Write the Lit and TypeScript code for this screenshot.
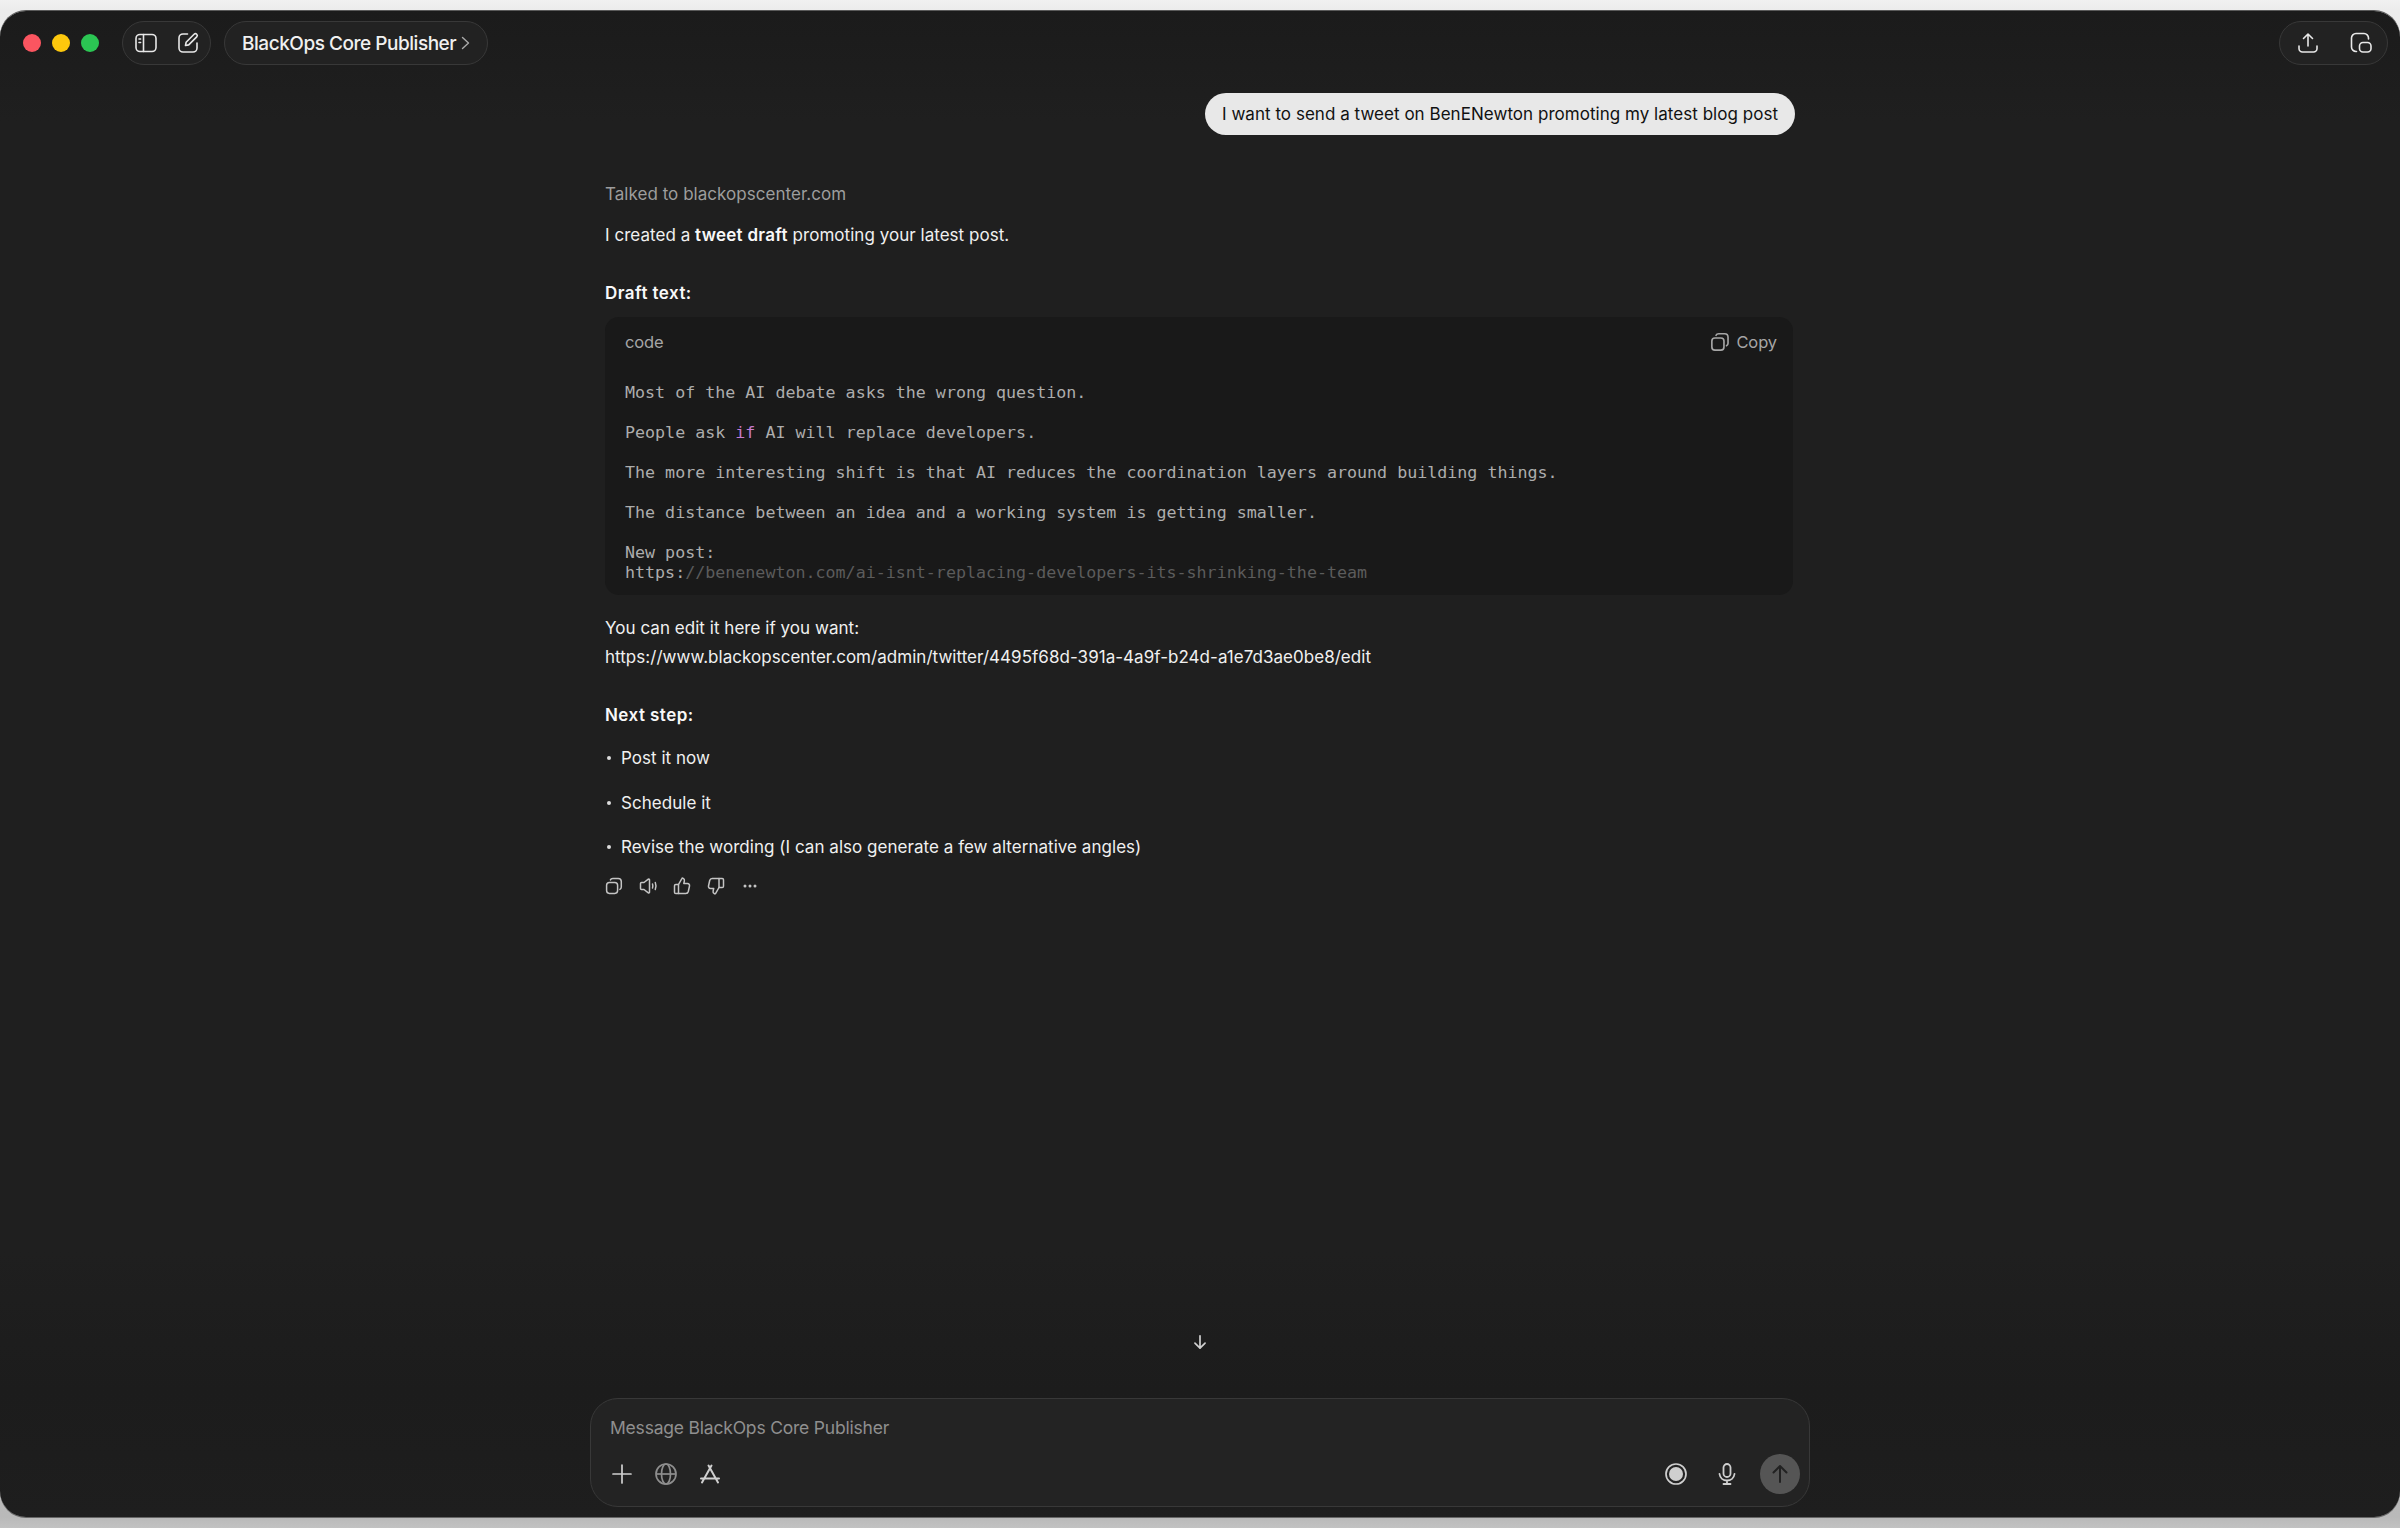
import { LitElement, html, css } from "lit";
import { customElement } from "lit/decorators.js";

const copyIcon = html`<svg viewBox="0 0 20 20" fill="none" stroke="currentColor" stroke-width="1.5" stroke-linecap="round" stroke-linejoin="round"><rect x="2.6" y="6.4" width="11" height="11" rx="2.8"/><path d="M6.4 3.900c.4-1 1.300-1.400 2.400-1.400h5.400c1.800 0 3.100 1.300 3.100 3.100v5.500c0 1-.5 1.900-1.400 2.300"/></svg>`;

@customElement("app-root")
export class AppRoot extends LitElement {
  static styles = css`
    :host {
      display: block;
      height: 1528px;
      overflow: hidden;
      background: linear-gradient(180deg, #f1f1f1 0, #ececec 10px, #b9b9b9 1517px, #c2c2c2 100%);
      font-family: Inter, "Liberation Sans", sans-serif;
    }
    svg { display: block; }
    .window {
      box-sizing: border-box;
      margin-top: 11px;
      height: 1506px;
      border-radius: 26px;
      background: linear-gradient(180deg, #1b1b1b 0, #1f1f1f 110px, #1f1f1f 1240px, #1c1c1c 1380px, #1e1e1e 100%);
      display: flex;
      flex-direction: column;
      box-shadow: 0 -1px 0 #5a5a5a, 0 1px 0 #666;
      color: #ececec;
    }
    .topbar {
      flex: none;
      height: 54px;
      box-sizing: border-box;
      padding: 10px 12px 0 23px;
      display: flex;
      align-items: flex-start;
    }
    .lights { display: flex; gap: 11px; margin-top: 13px; margin-right: 23px; }
    .dot { width: 18px; height: 18px; border-radius: 50%; }
    .red { background: #fb5560; }
    .yellow { background: #fdc80d; }
    .green { background: #2bc653; }
    .pill {
      box-sizing: border-box;
      height: 44px;
      border: 1px solid #383838;
      border-radius: 22px;
      background: #222222;
      display: flex;
      align-items: center;
      color: #e8e8e8;
    }
    .pill-icons { width: 89px; padding: 0 10px 0 11px; justify-content: space-between; margin-right: 13px; }
    .pill-icons svg { width: 24px; height: 24px; }
    .title {
      width: 264px;
      padding-left: 17px;
      font-size: 19px;
      font-weight: 500;
      color: #f0f0f0;
      letter-spacing: -0.47px;
      white-space: nowrap;
      gap: 5px;
    }
    .title svg { width: 9px; height: 14px; color: #aaa; }
    .spacer { flex: 1; }
    .pill-right { width: 109px; padding: 0 14px 0 16px; justify-content: space-between; }
    .pill-right svg { width: 24px; height: 24px; }

    .main { flex: 1; min-height: 0; display: flex; flex-direction: column; align-items: center; padding-top: 28px; }
    .column { width: 1190px; font-size: 17px; line-height: 26px; color: #f0f0f0; letter-spacing: 0.035px; }
    .bubble-row { display: flex; justify-content: flex-end; margin-bottom: 46px; }
    .bubble {
      box-sizing: border-box;
      width: 590px;
      height: 42px;
      border-radius: 21px;
      background: #e8e8e8;
      color: #111;
      padding-left: 17px;
      line-height: 42px;
      white-space: nowrap;
    }
    .talked { color: #9d9d9d; margin-bottom: 15px; }
    .p { white-space: nowrap; }
    .lead { margin-bottom: 32px; }
    b { font-weight: 600; color: #f8f8f8; letter-spacing: 0.28px; }
    .draft b, .next b { letter-spacing: 0.45px; }
    .draft { margin-bottom: 11px; }
    .code {
      box-sizing: border-box;
      width: 1188px;
      height: 278px;
      border-radius: 14px;
      background: #191919;
      padding: 0 16px 0 20px;
      color: #a9a9a9;
    }
    .code-head {
      height: 50px;
      display: flex;
      align-items: center;
      justify-content: space-between;
      color: #a6a6a6;
      font-size: 16.5px;
      letter-spacing: -0.1px;
    }
    .copy { display: flex; align-items: center; gap: 5px; }
    .copy svg { width: 22px; height: 22px; }
    pre {
      margin: 16px 0 0;
      font-family: "DejaVu Sans Mono", monospace;
      font-size: 16.66px;
      letter-spacing: 0;
      line-height: 20px;
      color: #adadad;
    }
    .kw { color: #c77dd0; }
    .dim { color: #5c5c5c; }
    .edit { margin-top: 19px; line-height: 29px; }
    .next { margin-top: 30px; margin-bottom: 17px; }
    ul { list-style: none; margin: 0; padding: 0; display: flex; flex-direction: column; gap: 18.5px; }
    li { display: flex; align-items: center; }
    .bullet { width: 4px; height: 4px; border-radius: 50%; background: #dcdcdc; margin: 0 10px 0 2px; flex: none; }
    .actions { display: flex; gap: 14px; margin-top: 16px; margin-left: -1px; color: #c4c4c4; }
    .actions svg { width: 20px; height: 20px; }
    .down-row { flex: none; height: 30px; margin-bottom: 41px; display: flex; justify-content: center; align-items: center; color: #d0d0d0; }
    .down-row svg { width: 18px; height: 18px; }
    .composer {
      flex: none;
      box-sizing: border-box;
      width: 1220px;
      height: 109px;
      margin: 0 auto 10px;
      border: 1px solid #383838;
      border-radius: 28px;
      background: #232323;
      display: flex;
      flex-direction: column;
      padding: 16px 9px 0 19px;
    }
    .placeholder { color: #8f8f8f; font-size: 17.5px; line-height: 26px; letter-spacing: -0.2px; white-space: nowrap; }
    .tools { display: flex; align-items: center; margin-top: 13px; height: 40px; }
    .tool-left { display: flex; align-items: center; gap: 20px; color: #cfcfcf; }
    .tool-left svg { width: 24px; height: 24px; }
    .tool-right { margin-left: auto; display: flex; align-items: center; gap: 27px; color: #cfcfcf; }
    .tool-right svg { width: 24px; height: 24px; }
    .send { width: 40px; height: 40px; border-radius: 50%; background: #555; color: #222; display: flex; align-items: center; justify-content: center; margin-left: -6px; }
    .send svg { width: 24px; height: 24px; }
    .globe { color: #8e8e8e; }
  `;

  render() {
    return html`
      <div class="window">
        <header class="topbar">
          <div class="lights"><span class="dot red"></span><span class="dot yellow"></span><span class="dot green"></span></div>
          <div class="pill pill-icons">
            <svg viewBox="0 0 24 24" fill="none" stroke="currentColor" stroke-width="1.6" stroke-linecap="round"><rect x="2" y="3.500" width="20" height="17" rx="4"/><path d="M9.500 3.500v17M5 8h1.600M5 11.500h1.600"/></svg>
            <svg viewBox="0 0 24 24" fill="none" stroke="currentColor" stroke-width="1.6" stroke-linecap="round" stroke-linejoin="round"><path d="M11.500 3H7a4 4 0 0 0-4 4v10a4 4 0 0 0 4 4h10a4 4 0 0 0 4-4v-5"/><path d="M9.500 14.500l.6-3.200 8-8a1.800 1.800 0 0 1 2.600 2.600l-8 8z"/></svg>
          </div>
          <div class="pill title">BlackOps Core Publisher
            <svg viewBox="0 0 9 14" fill="none" stroke="currentColor" stroke-width="1.4" stroke-linecap="round" stroke-linejoin="round"><path d="M1.500 1.500L7.500 7l-6 5.500"/></svg>
          </div>
          <div class="spacer"></div>
          <div class="pill pill-right">
            <svg viewBox="0 0 24 24" fill="none" stroke="currentColor" stroke-width="1.6" stroke-linecap="round" stroke-linejoin="round"><path d="M12 15V3M7.500 7.500L12 3l4.500 4.500M3 15v2.500A3.500 3.500 0 0 0 6.500 21h11a3.500 3.500 0 0 0 3.500-3.500V15"/></svg>
            <svg viewBox="0 0 24 24" fill="none" stroke="currentColor" stroke-width="1.6" stroke-linecap="round" stroke-linejoin="round"><path d="M7.500 20.500H7A4.500 4.500 0 0 1 2.500 16V7A4.500 4.500 0 0 1 7 2.500h8A4.500 4.500 0 0 1 19.500 7v1"/><rect x="10.500" y="11.500" width="11.500" height="9.500" rx="3.500"/></svg>
          </div>
        </header>

        <main class="main">
          <div class="column">
            <div class="bubble-row"><div class="bubble">I want to send a tweet on BenENewton promoting my latest blog post</div></div>
            <div class="talked">Talked to blackopscenter.com</div>
            <div class="p lead">I created a <b>tweet draft</b> promoting your latest post.</div>
            <div class="p draft"><b>Draft text:</b></div>
            <div class="code">
              <div class="code-head"><span>code</span><span class="copy">${copyIcon}Copy</span></div>
              <pre>Most of the AI debate asks the wrong question.

People ask <span class="kw">if</span> AI will replace developers.

The more interesting shift is that AI reduces the coordination layers around building things.

The distance between an idea and a working system is getting smaller.

New post:
https:<span class="dim">//benenewton.com/ai-isnt-replacing-developers-its-shrinking-the-team</span></pre>
            </div>
            <div class="p edit">You can edit it here if you want:<br />https://www.blackopscenter.com/admin/twitter/4495f68d-391a-4a9f-b24d-a1e7d3ae0be8/edit</div>
            <div class="p next"><b>Next step:</b></div>
            <ul>
              <li><span class="bullet"></span>Post it now</li>
              <li><span class="bullet"></span>Schedule it</li>
              <li><span class="bullet"></span>Revise the wording (I can also generate a few alternative angles)</li>
            </ul>
            <div class="actions">
              ${copyIcon}
              <svg viewBox="0 0 20 20" fill="none" stroke="currentColor" stroke-width="1.5" stroke-linecap="round" stroke-linejoin="round"><path d="M2.500 7.500v5c0 .6.400 1 1 1H6l4.300 3.300c.6.400 1.200.100 1.200-.6V3.800c0-.7-.6-1-1.200-.6L6 6.500H3.500c-.6 0-1 .4-1 1z"/><path d="M14.500 8c.5 1.300.5 2.700 0 4M17.300 6.500c.9 2.300.9 4.700 0 7"/></svg>
              <svg viewBox="0 0 20 20" fill="none" stroke="currentColor" stroke-width="1.5" stroke-linecap="round" stroke-linejoin="round"><path d="M6.500 8.500l3.200-5.700c.3-.6.900-.8 1.500-.5 1 .5 1.400 1.500 1.200 2.500L11.800 7.500h3.700c1.300 0 2.300 1.200 2 2.500l-1.200 5.500c-.3 1.200-1.300 2-2.500 2H6.500"/><path d="M2.500 9.800c0-.7.600-1.300 1.300-1.300h2.700v9H3.800c-.7 0-1.300-.6-1.300-1.300z"/></svg>
              <svg viewBox="0 0 20 20" fill="none" stroke="currentColor" stroke-width="1.5" stroke-linecap="round" stroke-linejoin="round"><path d="M13 11.500L9.800 17.200c-.3.6-.9.800-1.500.5-1-.5-1.400-1.500-1.200-2.500l.6-2.700H4.500c-1.300 0-2.300-1.200-2-2.500l1.200-5.500c.3-1.200 1.300-2 2.500-2H13"/><path d="M17.500 10.200c0 .7-.6 1.300-1.300 1.300H13v-9h3.200c.7 0 1.300.6 1.300 1.300z"/></svg>
              <svg viewBox="0 0 20 20" fill="currentColor"><circle cx="5" cy="10" r="1.500"/><circle cx="10" cy="10" r="1.500"/><circle cx="15" cy="10" r="1.500"/></svg>
            </div>
          </div>
        </main>

        <div class="down-row">
          <svg viewBox="0 0 16 16" fill="none" stroke="currentColor" stroke-width="1.500" stroke-linecap="round" stroke-linejoin="round"><path d="M8 2.500v11M3.500 9L8 13.500 12.500 9"/></svg>
        </div>

        <footer class="composer">
          <div class="placeholder">Message BlackOps Core Publisher</div>
          <div class="tools">
            <div class="tool-left">
              <svg viewBox="0 0 24 24" fill="none" stroke="currentColor" stroke-width="1.700" stroke-linecap="round"><path d="M12 3v18M3 12h18"/></svg>
              <svg class="globe" viewBox="0 0 24 24" fill="none" stroke="currentColor" stroke-width="1.700"><circle cx="12" cy="12" r="10"/><ellipse cx="12" cy="12" rx="4.500" ry="10"/><path d="M2 12h20"/></svg>
              <svg viewBox="0 0 24 24" fill="none" stroke="currentColor" stroke-width="2" stroke-linecap="round"><path d="M10.500 3.500L20 20.500M13.500 3.500L4 20.500M3 16.500h18"/></svg>
            </div>
            <div class="tool-right">
              <svg viewBox="0 0 24 24"><circle cx="12" cy="12" r="10" fill="none" stroke="currentColor" stroke-width="1.700"/><circle cx="12" cy="12" r="7" fill="currentColor"/></svg>
              <svg viewBox="0 0 24 24" fill="none" stroke="currentColor" stroke-width="1.800" stroke-linecap="round" stroke-linejoin="round"><rect x="8.500" y="2" width="7" height="13" rx="3.500"/><path d="M4.500 12c.5 4 3.700 6.500 7.500 6.500s7-2.500 7.500-6.500M12 18.500V22M8.500 22h7"/></svg>
              <div class="send"><svg viewBox="0 0 24 24" fill="none" stroke="currentColor" stroke-width="2" stroke-linecap="round" stroke-linejoin="round"><path d="M12 20V4M5.500 10.500L12 4l6.500 6.500"/></svg></div>
            </div>
          </div>
        </footer>
      </div>
    `;
  }
}
